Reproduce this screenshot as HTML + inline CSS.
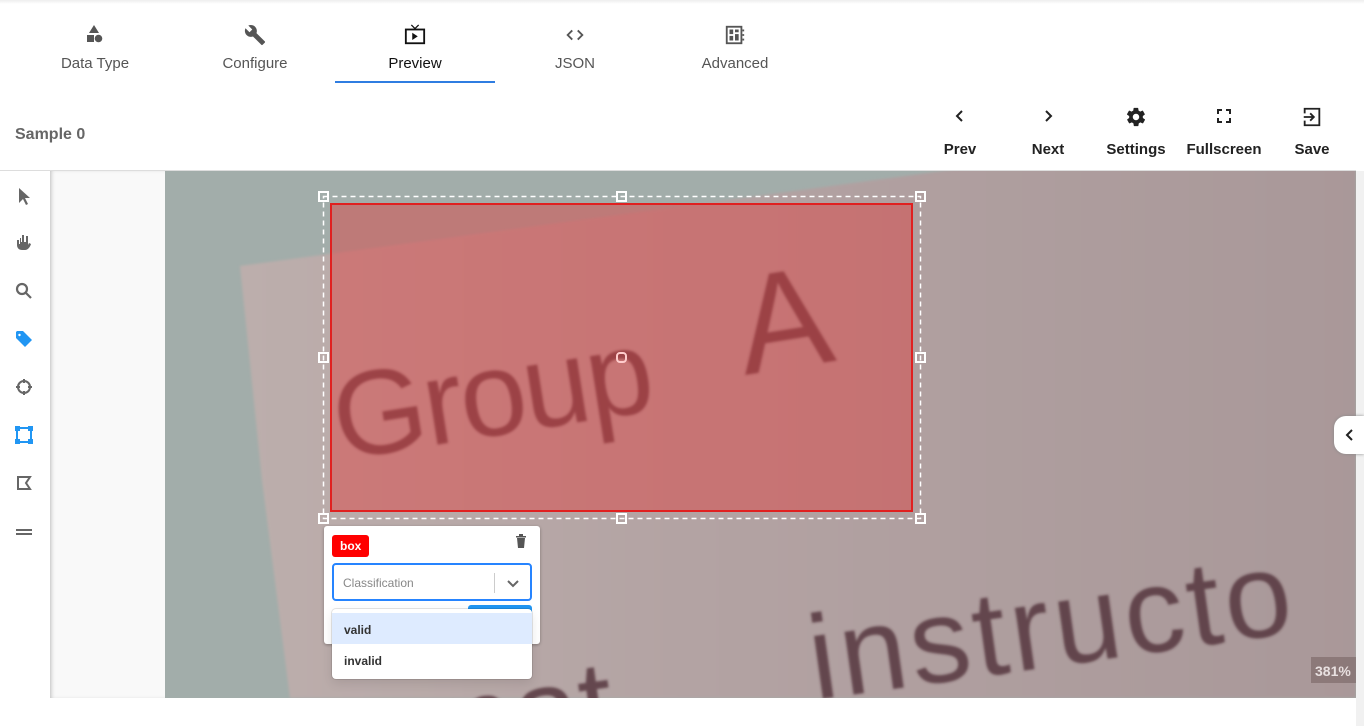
<!DOCTYPE html>
<html><head><meta charset="utf-8"><style>
*{box-sizing:border-box;margin:0;padding:0}
html,body{width:1364px;height:726px;overflow:hidden}
body{background:#fff;font-family:"Liberation Sans",sans-serif;position:relative}
.tab{position:absolute;top:0;width:160px;height:82px;text-align:center;color:#555;font-size:15px}
.tab svg{position:absolute;left:69px;top:24px}
.tab span{position:absolute;left:0;right:0;top:55px}
.act{color:#111;border-bottom:2px solid #2f7de1}
.tb{position:absolute;top:106px;height:60px;text-align:center;font-weight:bold;font-size:15px;color:#222}
.tb svg{position:absolute;left:50%;top:0;transform:translateX(-50%)}
.tb span{position:absolute;left:0;right:0;top:35px}
.side svg{position:absolute;left:15px}
</style></head><body>
<div style="position:absolute;left:0;top:0;width:1364px;height:4px;background:linear-gradient(#eee,#fff)"></div>
<div class="tab" style="left:15px"><svg width="20" height="20" viewBox="0 0 20 20" fill="#555"><path d="M10 1l5 8H5z"/><rect x="3" y="11" width="7" height="7"/><circle cx="14.5" cy="14.5" r="3.8"/></svg><span>Data Type</span></div>
<div class="tab" style="left:175px"><svg width="22" height="22" viewBox="0 0 24 24" fill="#555"><path d="M22.7 19l-9.1-9.1c.9-2.3.4-5-1.5-6.9-2-2-5-2.4-7.4-1.3L9 6 6 9 1.6 4.7C.4 7.1.9 10.1 2.9 12.1c1.9 1.9 4.6 2.4 6.9 1.5l9.1 9.1c.4.4 1 .4 1.4 0l2.3-2.3c.5-.4.5-1.1.1-1.4z"/></svg><span>Configure</span></div>
<div class="tab act" style="left:335px;height:83px"><svg width="22" height="22" viewBox="0 0 24 24"><path d="M8 1l4 4 4-4" stroke="#111" stroke-width="1.4" fill="none"/><rect x="2" y="6" width="20" height="15" fill="none" stroke="#111" stroke-width="2"/><path d="M9 9.5v8l6-4z" fill="#111"/></svg><span>Preview</span></div>
<div class="tab" style="left:495px"><svg width="22" height="22" viewBox="0 0 24 24" fill="none" stroke="#555" stroke-width="2"><path d="M9 7l-5 5 5 5M15 7l5 5-5 5"/></svg><span>JSON</span></div>
<div class="tab" style="left:655px"><svg width="22" height="22" viewBox="0 0 24 24"><rect x="3" y="3" width="16" height="18" fill="none" stroke="#555" stroke-width="2"/><rect x="6" y="6" width="4" height="5" fill="#555"/><rect x="12" y="6" width="4" height="3" fill="#555"/><rect x="12" y="11" width="4" height="7" fill="#555"/><rect x="6" y="13" width="4" height="5" fill="#555"/><path d="M20 7h2M20 12h2M20 17h2" stroke="#555" stroke-width="2"/></svg><span>Advanced</span></div>
<div style="position:absolute;left:15px;top:126px;font-size:16px;font-weight:bold;color:#666">Sample 0</div>
<div class="tb" style="left:930px;width:60px"><svg width="20" height="20" viewBox="0 0 20 20" fill="none" stroke="#222" stroke-width="2"><path d="M12 5l-5 5 5 5"/></svg><span>Prev</span></div>
<div class="tb" style="left:1018px;width:60px"><svg width="20" height="20" viewBox="0 0 20 20" fill="none" stroke="#222" stroke-width="2"><path d="M8 5l5 5-5 5"/></svg><span>Next</span></div>
<div class="tb" style="left:1100px;width:72px"><svg width="22" height="22" viewBox="0 0 24 24" fill="#222"><path d="M19.4 13c.1-.3.1-.7.1-1s0-.7-.1-1l2.1-1.600c.2-.2.2-.4.1-.6l-2-3.5c-.1-.2-.4-.3-.6-.2l-2.5 1c-.5-.4-1.1-.7-1.7-1l-.4-2.7c0-.2-.2-.4-.5-.4h-4c-.3 0-.5.2-.5.4l-.4 2.7c-.6.2-1.2.6-1.7 1l-2.5-1c-.2-.1-.5 0-.6.2l-2 3.5c-.1.2-.1.5.1.6L4.6 11c0 .3-.1.7-.1 1s0 .7.1 1l-2.1 1.6c-.2.2-.2.4-.1.6l2 3.5c.1.2.4.3.6.2l2.5-1c.5.4 1.1.7 1.7 1l.4 2.7c0 .2.2.4.5.4h4c.3 0 .5-.2.5-.4l.4-2.7c.6-.2 1.2-.6 1.7-1l2.5 1c.2.1.5 0 .6-.2l2-3.5c.1-.2.1-.5-.1-.6L19.4 13zM12 15.5c-1.9 0-3.5-1.6-3.5-3.5s1.6-3.5 3.5-3.5 3.5 1.6 3.5 3.5-1.6 3.5-3.5 3.5z"/></svg><span>Settings</span></div>
<div class="tb" style="left:1184px;width:80px"><svg width="20" height="20" viewBox="0 0 20 20" fill="none" stroke="#222" stroke-width="2"><path d="M4 8V4h4M12 4h4v4M16 12v4h-4M8 16H4v-4"/></svg><span>Fullscreen</span></div>
<div class="tb" style="left:1282px;width:60px"><svg width="22" height="22" viewBox="0 0 24 24" fill="none" stroke="#222" stroke-width="2"><path d="M9 3h11v18H9M9 3H4v5M4 16v5h5M3 12h11M10 8l4 4-4 4"/></svg><span>Save</span></div>
<!-- work area -->
<div style="position:absolute;left:0;top:170px;width:1356px;height:2px;background:#ddd"></div>
<div style="position:absolute;left:50px;top:171px;width:115px;height:527px;background:#f9f9f9;box-shadow:inset 3px 0 4px -2px #bbb"></div>
<div style="position:absolute;left:1356px;top:171px;width:8px;height:555px;background:#f1f1f1"></div>
<svg style="position:absolute;left:165px;top:171px" width="1191" height="527" viewBox="165 171 1191 527">
<defs><linearGradient id="pg" x1="0" x2="1" y1="0" y2="0"><stop offset="0" stop-color="#bcaeac"/><stop offset=".4" stop-color="#b3a3a3"/><stop offset="1" stop-color="#a99899"/></linearGradient>
<filter id="bl"><feGaussianBlur stdDeviation="1.2"/></filter></defs>
<rect x="165" y="171" width="1191" height="527" fill="#a2adaa"/>
<polygon points="240,266 1356,115 1356,698 290,698 262,480" fill="url(#pg)" filter="url(#bl)"/>
<g font-family="Liberation Sans,sans-serif" fill="#4a2a30" fill-opacity=".75" filter="url(#bl)">
<text x="340" y="460" font-size="120" letter-spacing="8" transform="rotate(-9 340 460)" textLength="330">Group</text>
<text x="745" y="375" font-size="140" transform="rotate(-9 745 375)">A</text>
<text x="815" y="700" font-size="120" letter-spacing="4" transform="rotate(-8 815 700)">instructo</text>
<text x="420" y="770" font-size="120" transform="rotate(-8 420 770)">mat</text>
</g>
<rect x="331" y="204" width="581" height="307" fill="rgba(225,60,60,0.45)" stroke="#e02020" stroke-width="2"/>
<rect x="323.5" y="196.5" width="597" height="322" fill="none" stroke="#fff" stroke-width="1.5" stroke-dasharray="5 4"/>
<g fill="none" stroke="#fff" stroke-width="2"><rect x="319" y="192" width="9" height="9"/><rect x="617" y="192" width="9" height="9"/><rect x="916" y="192" width="9" height="9"/><rect x="319" y="353" width="9" height="9"/><rect x="916" y="353" width="9" height="9"/><rect x="319" y="514" width="9" height="9"/><rect x="617" y="514" width="9" height="9"/><rect x="916" y="514" width="9" height="9"/><rect x="617" y="353" width="9" height="9" rx="3" stroke="#fcc"/></g>
<rect x="1311" y="657" width="45" height="26" fill="rgba(120,100,100,.6)"/>
<text x="1315" y="676" font-family="Liberation Sans,sans-serif" font-weight="bold" font-size="14" fill="#e8e0e0">381%</text>
</svg>
<div style="position:absolute;left:1334px;top:416px;width:30px;height:38px;background:#fff;border-radius:12px 0 0 12px;box-shadow:0 0 3px #888"><svg style="position:absolute;left:8px;top:11px" width="14" height="16" viewBox="0 0 14 16" fill="none" stroke="#222" stroke-width="2"><path d="M10 3L5 8l5 5"/></svg></div>
<!-- sidebar -->
<div class="side" style="position:absolute;left:0;top:171px;width:50px;height:555px;background:#fff">
<svg style="top:16px" width="18" height="18" viewBox="0 0 18 18" fill="#666"><path d="M4 1v15l4-4 3 6 2-1-3-6h5z"/></svg>
<svg style="top:62px" width="18" height="18" viewBox="0 0 18 18" fill="#666"><path d="M5 5v6H4V7H2v5c0 3 2 5 5 5h3c3 0 5-3 6-6l-2-1-1 2V3h-2v6H9V2H7v7H6V5z"/></svg>
<svg style="top:111px" width="18" height="18" viewBox="0 0 18 18" fill="none" stroke="#666" stroke-width="2.2"><circle cx="7" cy="7" r="5"/><path d="M11 11l5 5"/></svg>
<svg style="top:159px" width="18" height="18" viewBox="0 0 18 18" fill="#2196f3"><path d="M1 2v6l9 9 7-7-9-9H2z"/><circle cx="4.5" cy="5" r="1.2" fill="#fff"/></svg>
<svg style="top:207px" width="18" height="18" viewBox="0 0 18 18" fill="none" stroke="#666" stroke-width="2"><circle cx="9" cy="9" r="6"/><path d="M9 1v4M9 13v4M1 9h4M13 9h4"/></svg>
<svg style="top:255px" width="18" height="18" viewBox="0 0 18 18" fill="none" stroke="#2196f3" stroke-width="2"><rect x="2" y="2" width="14" height="14"/><g fill="#2196f3"><rect x="0" y="0" width="4" height="4"/><rect x="14" y="0" width="4" height="4"/><rect x="0" y="14" width="4" height="4"/><rect x="14" y="14" width="4" height="4"/></g></svg>
<svg style="top:303px" width="18" height="18" viewBox="0 0 18 18" fill="none" stroke="#666" stroke-width="2"><path d="M3 3h12l-4 6 4 6H3z"/></svg>
<svg style="top:352px" width="18" height="18" viewBox="0 0 18 18" stroke="#666" stroke-width="2"><path d="M1 7h16M1 11h16"/></svg>
</div>
<div style="position:absolute;left:0;top:698px;width:1356px;height:28px;background:#fff"></div>
<!-- popup -->
<div style="position:absolute;left:324px;top:526px;width:216px;height:118px;background:#fff;border-radius:3px;box-shadow:0 1px 3px rgba(0,0,0,.3)">
<div style="position:absolute;left:8px;top:9px;background:#f00;color:#fff;font-weight:bold;font-size:12px;padding:4px 8px;border-radius:3px">box</div>
<svg style="position:absolute;left:191px;top:8px" width="12" height="14" viewBox="0 0 12 14" fill="#555"><path d="M1 2h10v1.5H1zM4 0h4v2H4zM2 4h8l-1 10H3z"/></svg>
<div style="position:absolute;left:8px;top:37px;width:200px;height:38px;border:2px solid #2684ff;border-radius:4px;font-size:12px;color:#888;padding:11px 9px">Classification
<div style="position:absolute;left:160px;top:8px;width:1px;height:20px;background:#ccc"></div>
<svg style="position:absolute;left:172px;top:11px" width="14" height="14" viewBox="0 0 14 14" fill="none" stroke="#666" stroke-width="2"><path d="M2 5l5 5 5-5"/></svg></div>
<div style="position:absolute;left:144px;top:79px;width:64px;height:8px;background:#2196f3;border-radius:3px 3px 0 0"></div>
</div>
<div style="position:absolute;left:332px;top:609px;width:200px;height:70px;background:#fff;border-radius:4px;box-shadow:0 0 0 1px rgba(0,0,0,.1),0 4px 11px rgba(0,0,0,.1);font-size:12px;font-weight:bold;color:#333">
<div style="position:absolute;left:0;top:4px;width:200px;height:31px;background:#deebff;padding:10px 12px">valid</div>
<div style="position:absolute;left:0;top:35px;width:200px;height:31px;padding:10px 12px">invalid</div>
</div>
</body></html>
